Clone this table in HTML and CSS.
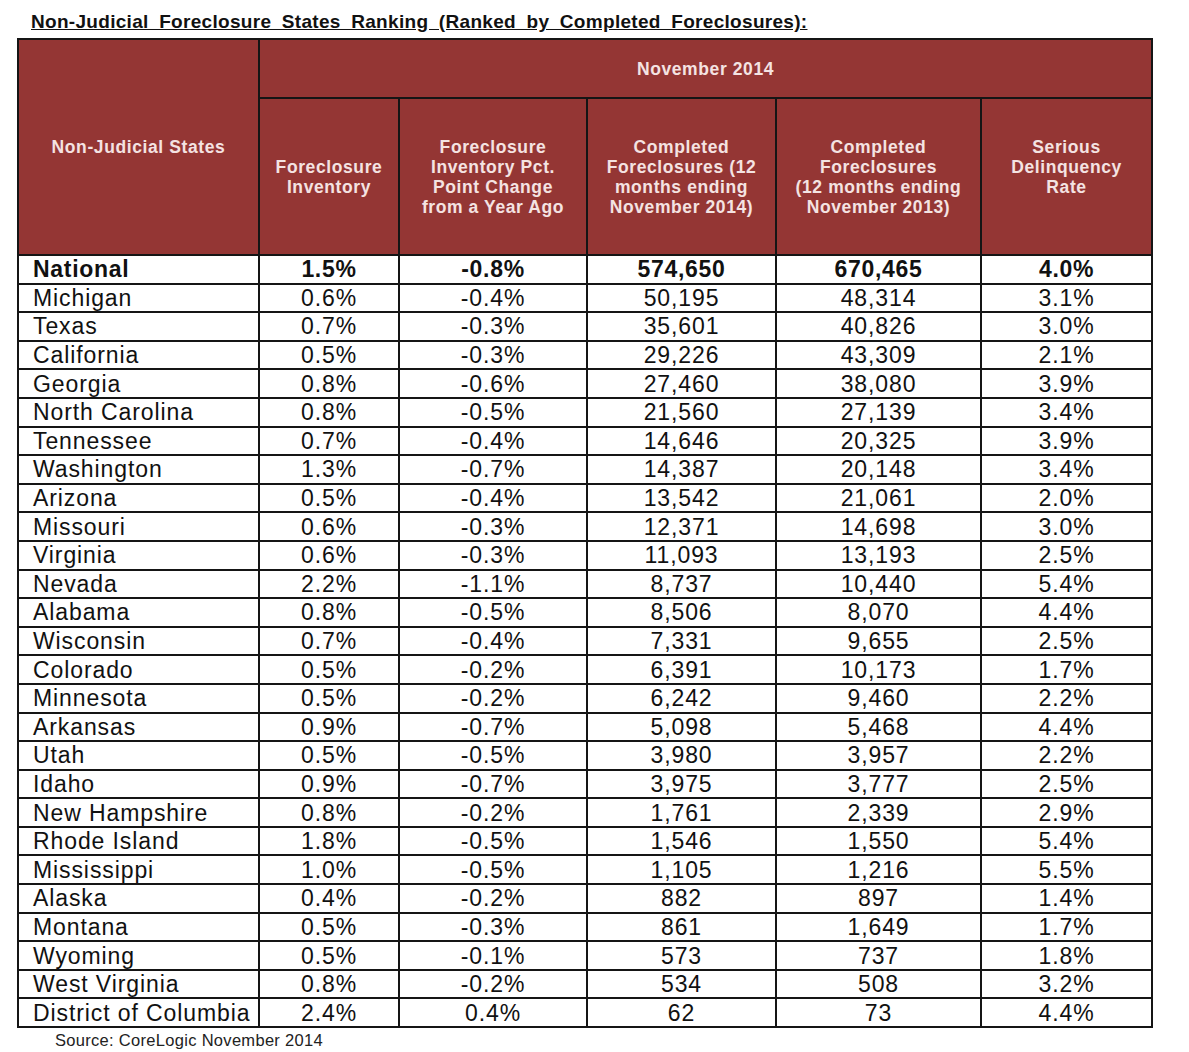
FILE: index.html
```html
<!DOCTYPE html>
<html>
<head>
<meta charset="utf-8">
<link rel="stylesheet" href="styles.css">
</head>
<body>
<div class="page">
  <h1 class="title">Non-Judicial Foreclosure States Ranking (Ranked by Completed Foreclosures):</h1>
  <table class="ranking">
    <colgroup>
      <col class="c-state"><col class="c-inv"><col class="c-chg"><col class="c-c14"><col class="c-c13"><col class="c-del">
    </colgroup>
    <thead>
      <tr class="h1">
        <th rowspan="2" class="h-state">Non-Judicial States</th>
        <th colspan="5" class="h-month">November 2014</th>
      </tr>
      <tr class="h2">
        <th>Foreclosure<br>Inventory</th>
        <th>Foreclosure<br>Inventory Pct.<br>Point Change<br>from a Year Ago</th>
        <th>Completed<br>Foreclosures (12<br>months ending<br>November 2014)</th>
        <th>Completed<br>Foreclosures<br>(12 months ending<br>November 2013)</th>
        <th class="h-del">Serious<br>Delinquency<br>Rate</th>
      </tr>
    </thead>
    <tbody>
      <tr class="national"><td>National</td><td>1.5%</td><td>-0.8%</td><td>574,650</td><td>670,465</td><td>4.0%</td></tr>
      <tr><td>Michigan</td><td>0.6%</td><td>-0.4%</td><td>50,195</td><td>48,314</td><td>3.1%</td></tr>
      <tr><td>Texas</td><td>0.7%</td><td>-0.3%</td><td>35,601</td><td>40,826</td><td>3.0%</td></tr>
      <tr><td>California</td><td>0.5%</td><td>-0.3%</td><td>29,226</td><td>43,309</td><td>2.1%</td></tr>
      <tr><td>Georgia</td><td>0.8%</td><td>-0.6%</td><td>27,460</td><td>38,080</td><td>3.9%</td></tr>
      <tr><td>North Carolina</td><td>0.8%</td><td>-0.5%</td><td>21,560</td><td>27,139</td><td>3.4%</td></tr>
      <tr><td>Tennessee</td><td>0.7%</td><td>-0.4%</td><td>14,646</td><td>20,325</td><td>3.9%</td></tr>
      <tr><td>Washington</td><td>1.3%</td><td>-0.7%</td><td>14,387</td><td>20,148</td><td>3.4%</td></tr>
      <tr><td>Arizona</td><td>0.5%</td><td>-0.4%</td><td>13,542</td><td>21,061</td><td>2.0%</td></tr>
      <tr><td>Missouri</td><td>0.6%</td><td>-0.3%</td><td>12,371</td><td>14,698</td><td>3.0%</td></tr>
      <tr><td>Virginia</td><td>0.6%</td><td>-0.3%</td><td>11,093</td><td>13,193</td><td>2.5%</td></tr>
      <tr><td>Nevada</td><td>2.2%</td><td>-1.1%</td><td>8,737</td><td>10,440</td><td>5.4%</td></tr>
      <tr><td>Alabama</td><td>0.8%</td><td>-0.5%</td><td>8,506</td><td>8,070</td><td>4.4%</td></tr>
      <tr><td>Wisconsin</td><td>0.7%</td><td>-0.4%</td><td>7,331</td><td>9,655</td><td>2.5%</td></tr>
      <tr><td>Colorado</td><td>0.5%</td><td>-0.2%</td><td>6,391</td><td>10,173</td><td>1.7%</td></tr>
      <tr><td>Minnesota</td><td>0.5%</td><td>-0.2%</td><td>6,242</td><td>9,460</td><td>2.2%</td></tr>
      <tr><td>Arkansas</td><td>0.9%</td><td>-0.7%</td><td>5,098</td><td>5,468</td><td>4.4%</td></tr>
      <tr><td>Utah</td><td>0.5%</td><td>-0.5%</td><td>3,980</td><td>3,957</td><td>2.2%</td></tr>
      <tr><td>Idaho</td><td>0.9%</td><td>-0.7%</td><td>3,975</td><td>3,777</td><td>2.5%</td></tr>
      <tr><td>New Hampshire</td><td>0.8%</td><td>-0.2%</td><td>1,761</td><td>2,339</td><td>2.9%</td></tr>
      <tr><td>Rhode Island</td><td>1.8%</td><td>-0.5%</td><td>1,546</td><td>1,550</td><td>5.4%</td></tr>
      <tr><td>Mississippi</td><td>1.0%</td><td>-0.5%</td><td>1,105</td><td>1,216</td><td>5.5%</td></tr>
      <tr><td>Alaska</td><td>0.4%</td><td>-0.2%</td><td>882</td><td>897</td><td>1.4%</td></tr>
      <tr><td>Montana</td><td>0.5%</td><td>-0.3%</td><td>861</td><td>1,649</td><td>1.7%</td></tr>
      <tr><td>Wyoming</td><td>0.5%</td><td>-0.1%</td><td>573</td><td>737</td><td>1.8%</td></tr>
      <tr><td>West Virginia</td><td>0.8%</td><td>-0.2%</td><td>534</td><td>508</td><td>3.2%</td></tr>
      <tr><td>District of Columbia</td><td>2.4%</td><td>0.4%</td><td>62</td><td>73</td><td>4.4%</td></tr>
    </tbody>
  </table>
  <p class="source">Source: CoreLogic November 2014</p>
</div>
</body>
</html>
```

FILE: styles.css
```css
html, body {
  margin: 0;
  padding: 0;
  background: #ffffff;
}

.page {
  padding-left: 17px;
  font-family: "Liberation Sans", Arial, sans-serif;
  color: #111111;
}

.title {
  margin: 0;
  padding: 11px 0 0 14px;
  height: 26px;
  box-sizing: border-box;
  font-size: 19px;
  line-height: 21px;
  font-weight: bold;
  text-decoration: underline;
  word-spacing: 5px;
  letter-spacing: 0.3px;
  color: #111111;
}

.ranking {
  margin-top: 12px;
  border-collapse: collapse;
  table-layout: fixed;
  width: 1135px;
  border: 2px solid #151515;
}

.c-state { width: 241px; }
.c-inv { width: 140px; }
.c-chg { width: 188px; }
.c-c14 { width: 189px; }
.c-c13 { width: 205px; }
.c-del { width: 171px; }

.ranking th,
.ranking td {
  border: 2px solid #151515;
  padding: 0;
}

.ranking th {
  background: #943634;
  color: #f4e3e2;
  font-size: 17.5px;
  line-height: 20px;
  font-weight: bold;
  letter-spacing: 0.6px;
  text-align: center;
  vertical-align: middle;
}

.h1 { height: 59px; }
.h2 { height: 157px; }

.h-state {
  padding-bottom: 2px;
}

.h-month {
  padding-bottom: 4px;
}

.h2 .h-del {
  padding-bottom: 20px;
}

.ranking tbody tr {
  height: 28.6px;
}

.ranking td {
  font-size: 23px;
  line-height: 22px;
  letter-spacing: 0.9px;
  text-align: center;
  vertical-align: middle;
  color: #111111;
}

.ranking td:first-child {
  text-align: left;
  padding-left: 14px;
}

.national td {
  font-weight: bold;
  letter-spacing: 0.7px;
}

.source {
  margin: 2px 0 0 38px;
  font-size: 16.5px;
  line-height: 20px;
  letter-spacing: 0.3px;
  color: #222222;
}
```
